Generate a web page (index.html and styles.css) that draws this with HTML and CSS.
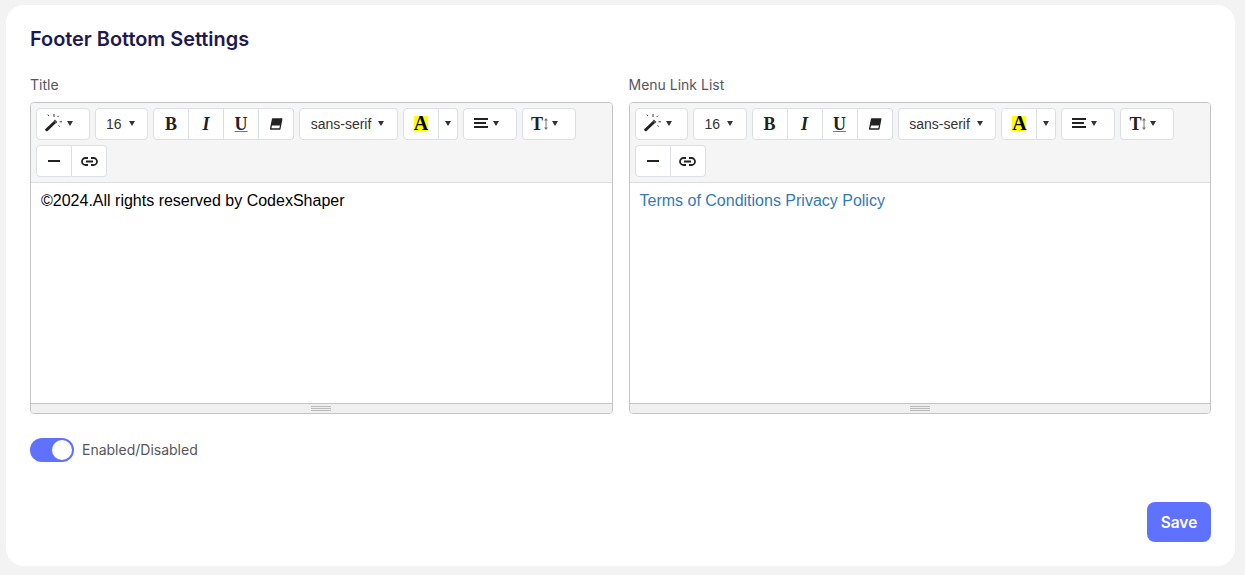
FILE: index.html
```html
<!DOCTYPE html>
<html lang="en">
<head>
<meta charset="utf-8">
<title>Footer Bottom Settings</title>
<link rel="stylesheet" href="styles.css">
</head>
<body>
<svg class="defs" width="0" height="0" aria-hidden="true">
  <symbol id="i-magic" viewBox="0 0 18 18">
    <path d="M.4 15 10 6l2 2.100-9.400 9a1 1 0 0 1-1.400 0l-.9-.8a1 1 0 0 1 .1-1.300Z" fill="#222"/>
    <path d="M8.600 7 10 5.600l2.400 2.400-1.400 1.400Z" fill="#555"/>
    <path d="M9 0v3M2.800.6l1 1.400M13.800 1.800l-1.200 1.200M14.600 7.800h2.400M14.600 12.600l-1-1.200" stroke="#333" stroke-width="1" fill="none"/>
  </symbol>
  <symbol id="i-eraser" viewBox="0 0 14 14">
    <path d="M3.600 2h9.200l-1.900 10H1.600Z" fill="#fff" stroke="#222" stroke-width="1.300" stroke-linejoin="round"/>
    <path d="M3.600 2h9.200l-1.200 6.400H2.500Z" fill="#222"/>
  </symbol>
  <symbol id="i-align" viewBox="0 0 14 10">
    <path d="M0 1h14M0 5h12M0 9h14" stroke="#222" stroke-width="2" fill="none"/>
  </symbol>
  <symbol id="i-minus" viewBox="0 0 12 4">
    <path d="M0 2h12" stroke="#222" stroke-width="2"/>
  </symbol>
  <symbol id="i-link" viewBox="0 0 17 9">
    <path d="M7 1H4.500a3.500 3.500 0 0 0 0 7H7M10 1h2.500a3.500 3.500 0 0 1 0 7H10M5 4.500h7" stroke="#222" stroke-width="1.800" fill="none"/>
  </symbol>
  <symbol id="i-height" viewBox="0 0 4 12">
    <path d="M2 2v8" stroke="#777" stroke-width="1"/>
    <path d="M2 0 4 2.500H0ZM2 12 0 9.500h4Z" fill="#777"/>
  </symbol>
</svg>

<main class="card">
  <h1 class="card-title">Footer Bottom Settings</h1>

  <div class="columns">
    <section class="field">
      <label class="field-label">Title</label>
      <div class="editor">
        <div class="toolbar">
          <div class="btn-group"><button class="btn btn-style"><svg class="ico ico-magic"><use href="#i-magic"/></svg><i class="caret caret-tight"></i></button></div>
          <div class="btn-group"><button class="btn btn-size">16<i class="caret"></i></button></div>
          <div class="btn-group">
            <button class="btn btn-icon"><span class="glyph glyph-b">B</span></button>
            <button class="btn btn-icon"><span class="glyph glyph-i">I</span></button>
            <button class="btn btn-icon"><span class="glyph glyph-u">U</span></button>
            <button class="btn btn-icon"><svg class="ico ico-eraser"><use href="#i-eraser"/></svg></button>
          </div>
          <div class="btn-group"><button class="btn btn-font">sans-serif<i class="caret"></i></button></div>
          <div class="btn-group">
            <button class="btn btn-icon"><span class="glyph glyph-a">A</span></button>
            <button class="btn btn-split"><i class="caret"></i></button>
          </div>
          <div class="btn-group"><button class="btn btn-para"><svg class="ico ico-align"><use href="#i-align"/></svg><i class="caret caret-para"></i></button></div>
          <div class="btn-group"><button class="btn btn-para btn-height"><span class="glyph glyph-t">T</span><svg class="ico ico-height"><use href="#i-height"/></svg><i class="caret caret-para"></i></button></div>
          <div class="btn-group">
            <button class="btn btn-icon"><svg class="ico ico-minus"><use href="#i-minus"/></svg></button>
            <button class="btn btn-icon"><svg class="ico ico-link"><use href="#i-link"/></svg></button>
          </div>
        </div>
        <div class="editable">©2024.All rights reserved by CodexShaper</div>
        <div class="statusbar"><span class="grip"></span></div>
      </div>
    </section>

    <section class="field">
      <label class="field-label">Menu Link List</label>
      <div class="editor">
        <div class="toolbar">
          <div class="btn-group"><button class="btn btn-style"><svg class="ico ico-magic"><use href="#i-magic"/></svg><i class="caret caret-tight"></i></button></div>
          <div class="btn-group"><button class="btn btn-size">16<i class="caret"></i></button></div>
          <div class="btn-group">
            <button class="btn btn-icon"><span class="glyph glyph-b">B</span></button>
            <button class="btn btn-icon"><span class="glyph glyph-i">I</span></button>
            <button class="btn btn-icon"><span class="glyph glyph-u">U</span></button>
            <button class="btn btn-icon"><svg class="ico ico-eraser"><use href="#i-eraser"/></svg></button>
          </div>
          <div class="btn-group"><button class="btn btn-font">sans-serif<i class="caret"></i></button></div>
          <div class="btn-group">
            <button class="btn btn-icon"><span class="glyph glyph-a">A</span></button>
            <button class="btn btn-split"><i class="caret"></i></button>
          </div>
          <div class="btn-group"><button class="btn btn-para"><svg class="ico ico-align"><use href="#i-align"/></svg><i class="caret caret-para"></i></button></div>
          <div class="btn-group"><button class="btn btn-para btn-height"><span class="glyph glyph-t">T</span><svg class="ico ico-height"><use href="#i-height"/></svg><i class="caret caret-para"></i></button></div>
          <div class="btn-group">
            <button class="btn btn-icon"><svg class="ico ico-minus"><use href="#i-minus"/></svg></button>
            <button class="btn btn-icon"><svg class="ico ico-link"><use href="#i-link"/></svg></button>
          </div>
        </div>
        <div class="editable"><a class="link" href="#">Terms of Conditions</a> <a class="link" href="#">Privacy Policy</a></div>
        <div class="statusbar"><span class="grip"></span></div>
      </div>
    </section>
  </div>

  <div class="toggle-row">
    <span class="toggle"><span class="toggle-knob"></span></span>
    <span class="toggle-label">Enabled/Disabled</span>
  </div>

  <div class="actions">
    <button class="save">Save</button>
  </div>
</main>
</body>
</html>
```

FILE: styles.css
```css
* { box-sizing: border-box; }

html, body { height: 100%; }

body {
  margin: 0;
  padding: 5px 10px 9px 6px;
  background: #f3f3f3;
  font-family: "Inter", "Liberation Sans", sans-serif;
  overflow: hidden;
}

.defs { position: absolute; }

.card {
  height: 561px;
  background: #fff;
  border-radius: 18px;
  padding: 21px 24px 24px;
  display: flex;
  flex-direction: column;
}

.card-title {
  margin: 0;
  font-size: 19.9px;
  line-height: 26px;
  font-weight: 600;
  color: #1e1a4f;
}

.columns {
  margin-top: 24px;
  display: grid;
  grid-template-columns: 1fr 1fr;
  column-gap: 16px;
}

.field-label {
  display: block;
  font-size: 14px;
  line-height: 18px;
  color: #55555f;
  margin-bottom: 8px;
}

.editor {
  height: 312px;
  border: 1px solid #c4c4c4;
  border-radius: 4px;
  display: flex;
  flex-direction: column;
  overflow: hidden;
}

.toolbar {
  height: 80px;
  flex: none;
  background: #f5f5f5;
  border-bottom: 1px solid #dcdcdc;
  padding: 0 0 5px 5px;
  display: flex;
  flex-wrap: wrap;
  align-content: flex-start;
}

.btn-group {
  display: flex;
  margin: 5px 5px 0 0;
  height: 32px;
}

.btn {
  height: 32px;
  padding: 0;
  margin: 0;
  background: #fff;
  border: 1px solid #dae0e5;
  border-left-width: 0;
  color: #333;
  font-family: "Liberation Sans", sans-serif;
  font-size: 14px;
  display: flex;
  align-items: center;
  justify-content: center;
}

.btn:first-child { border-left-width: 1px; border-radius: 4px 0 0 4px; }
.btn:last-child { border-radius: 0 4px 4px 0; }
.btn:only-child { border-radius: 4px; }

.btn-style { width: 53.6px; justify-content: flex-start; padding-left: 8px; }
.btn-size { width: 53.5px; padding-right: 2px; }
.btn-icon { width: 35px; }
.btn-icon:first-child { width: 36px; }
.btn-split { width: 19px; }
.btn-font { width: 98.8px; padding-right: 2px; }
.btn-para { width: 54px; justify-content: flex-start; padding-left: 10px; }
.btn-height { padding-left: 8px; }

.caret {
  width: 0;
  height: 0;
  margin-left: 7px;
  margin-bottom: 1px;
  border-left: 3.5px solid transparent;
  border-right: 3.5px solid transparent;
  border-top: 5px solid #333;
}
.btn-split .caret { margin-left: 0; }
.caret-tight { margin-left: 4px; }
.caret-para { margin-left: 5px; }
.ico-height + .caret-para { margin-left: 4px; }

.ico { display: block; flex: none; }
.ico-magic { width: 18px; height: 18px; margin-bottom: 2px; }
.ico-eraser { width: 14px; height: 14px; }
.ico-align { width: 14px; height: 10px; margin-bottom: 2px; }
.ico-minus { width: 12px; height: 4px; }
.ico-link { width: 17px; height: 9px; }
.ico-height { width: 4px; height: 12px; margin-left: 1px; }

.glyph {
  font-family: "Liberation Serif", serif;
  font-weight: 700;
  color: #222;
  line-height: 1;
}
.glyph-b { font-size: 18px; }
.glyph-i { font-size: 18px; font-style: italic; }
.glyph-u { font-size: 18px; text-decoration: underline; text-decoration-color: #777; }
.glyph-a {
  font-size: 20px;
  width: 14px;
  height: 15px;
  display: flex;
  justify-content: center;
  line-height: 15px;
  background: #ff0;
  color: #000;
  margin-bottom: 2px;
}
.glyph-t { font-size: 18px; }

.editable {
  flex: 1;
  background: #fff;
  padding: 10px;
  font-family: "Liberation Sans", sans-serif;
  font-size: 16px;
  line-height: 16px;
  color: #000;
}

.link { color: #337ab7; text-decoration: none; }

.statusbar {
  height: 10px;
  flex: none;
  background: #f0f0f0;
  border-top: 1px solid #c4c4c4;
  display: flex;
  justify-content: center;
  align-items: center;
}

.grip {
  width: 20px;
  height: 5px;
  border-top: 1px solid #bbb;
  border-bottom: 1px solid #bbb;
  background: linear-gradient(#bbb, #bbb) center / 100% 1px no-repeat;
}

.toggle-row {
  margin-top: 24px;
  display: flex;
  align-items: center;
  gap: 8px;
}

.toggle {
  width: 44px;
  height: 24px;
  border-radius: 12px;
  background: #5f72ff;
  display: flex;
  justify-content: flex-end;
  align-items: center;
  padding-right: 2px;
}

.toggle-knob {
  width: 20px;
  height: 20px;
  border-radius: 50%;
  background: #fff;
}

.toggle-label {
  font-size: 14px;
  line-height: 18px;
  color: #55555f;
}

.actions {
  margin-top: auto;
  display: flex;
  justify-content: flex-end;
}

.save {
  width: 64px;
  height: 40px;
  border: 0;
  border-radius: 8px;
  background: #5f72ff;
  color: #fff;
  font-family: "Inter", "Liberation Sans", sans-serif;
  font-size: 15.5px;
  font-weight: 600;
}
```
